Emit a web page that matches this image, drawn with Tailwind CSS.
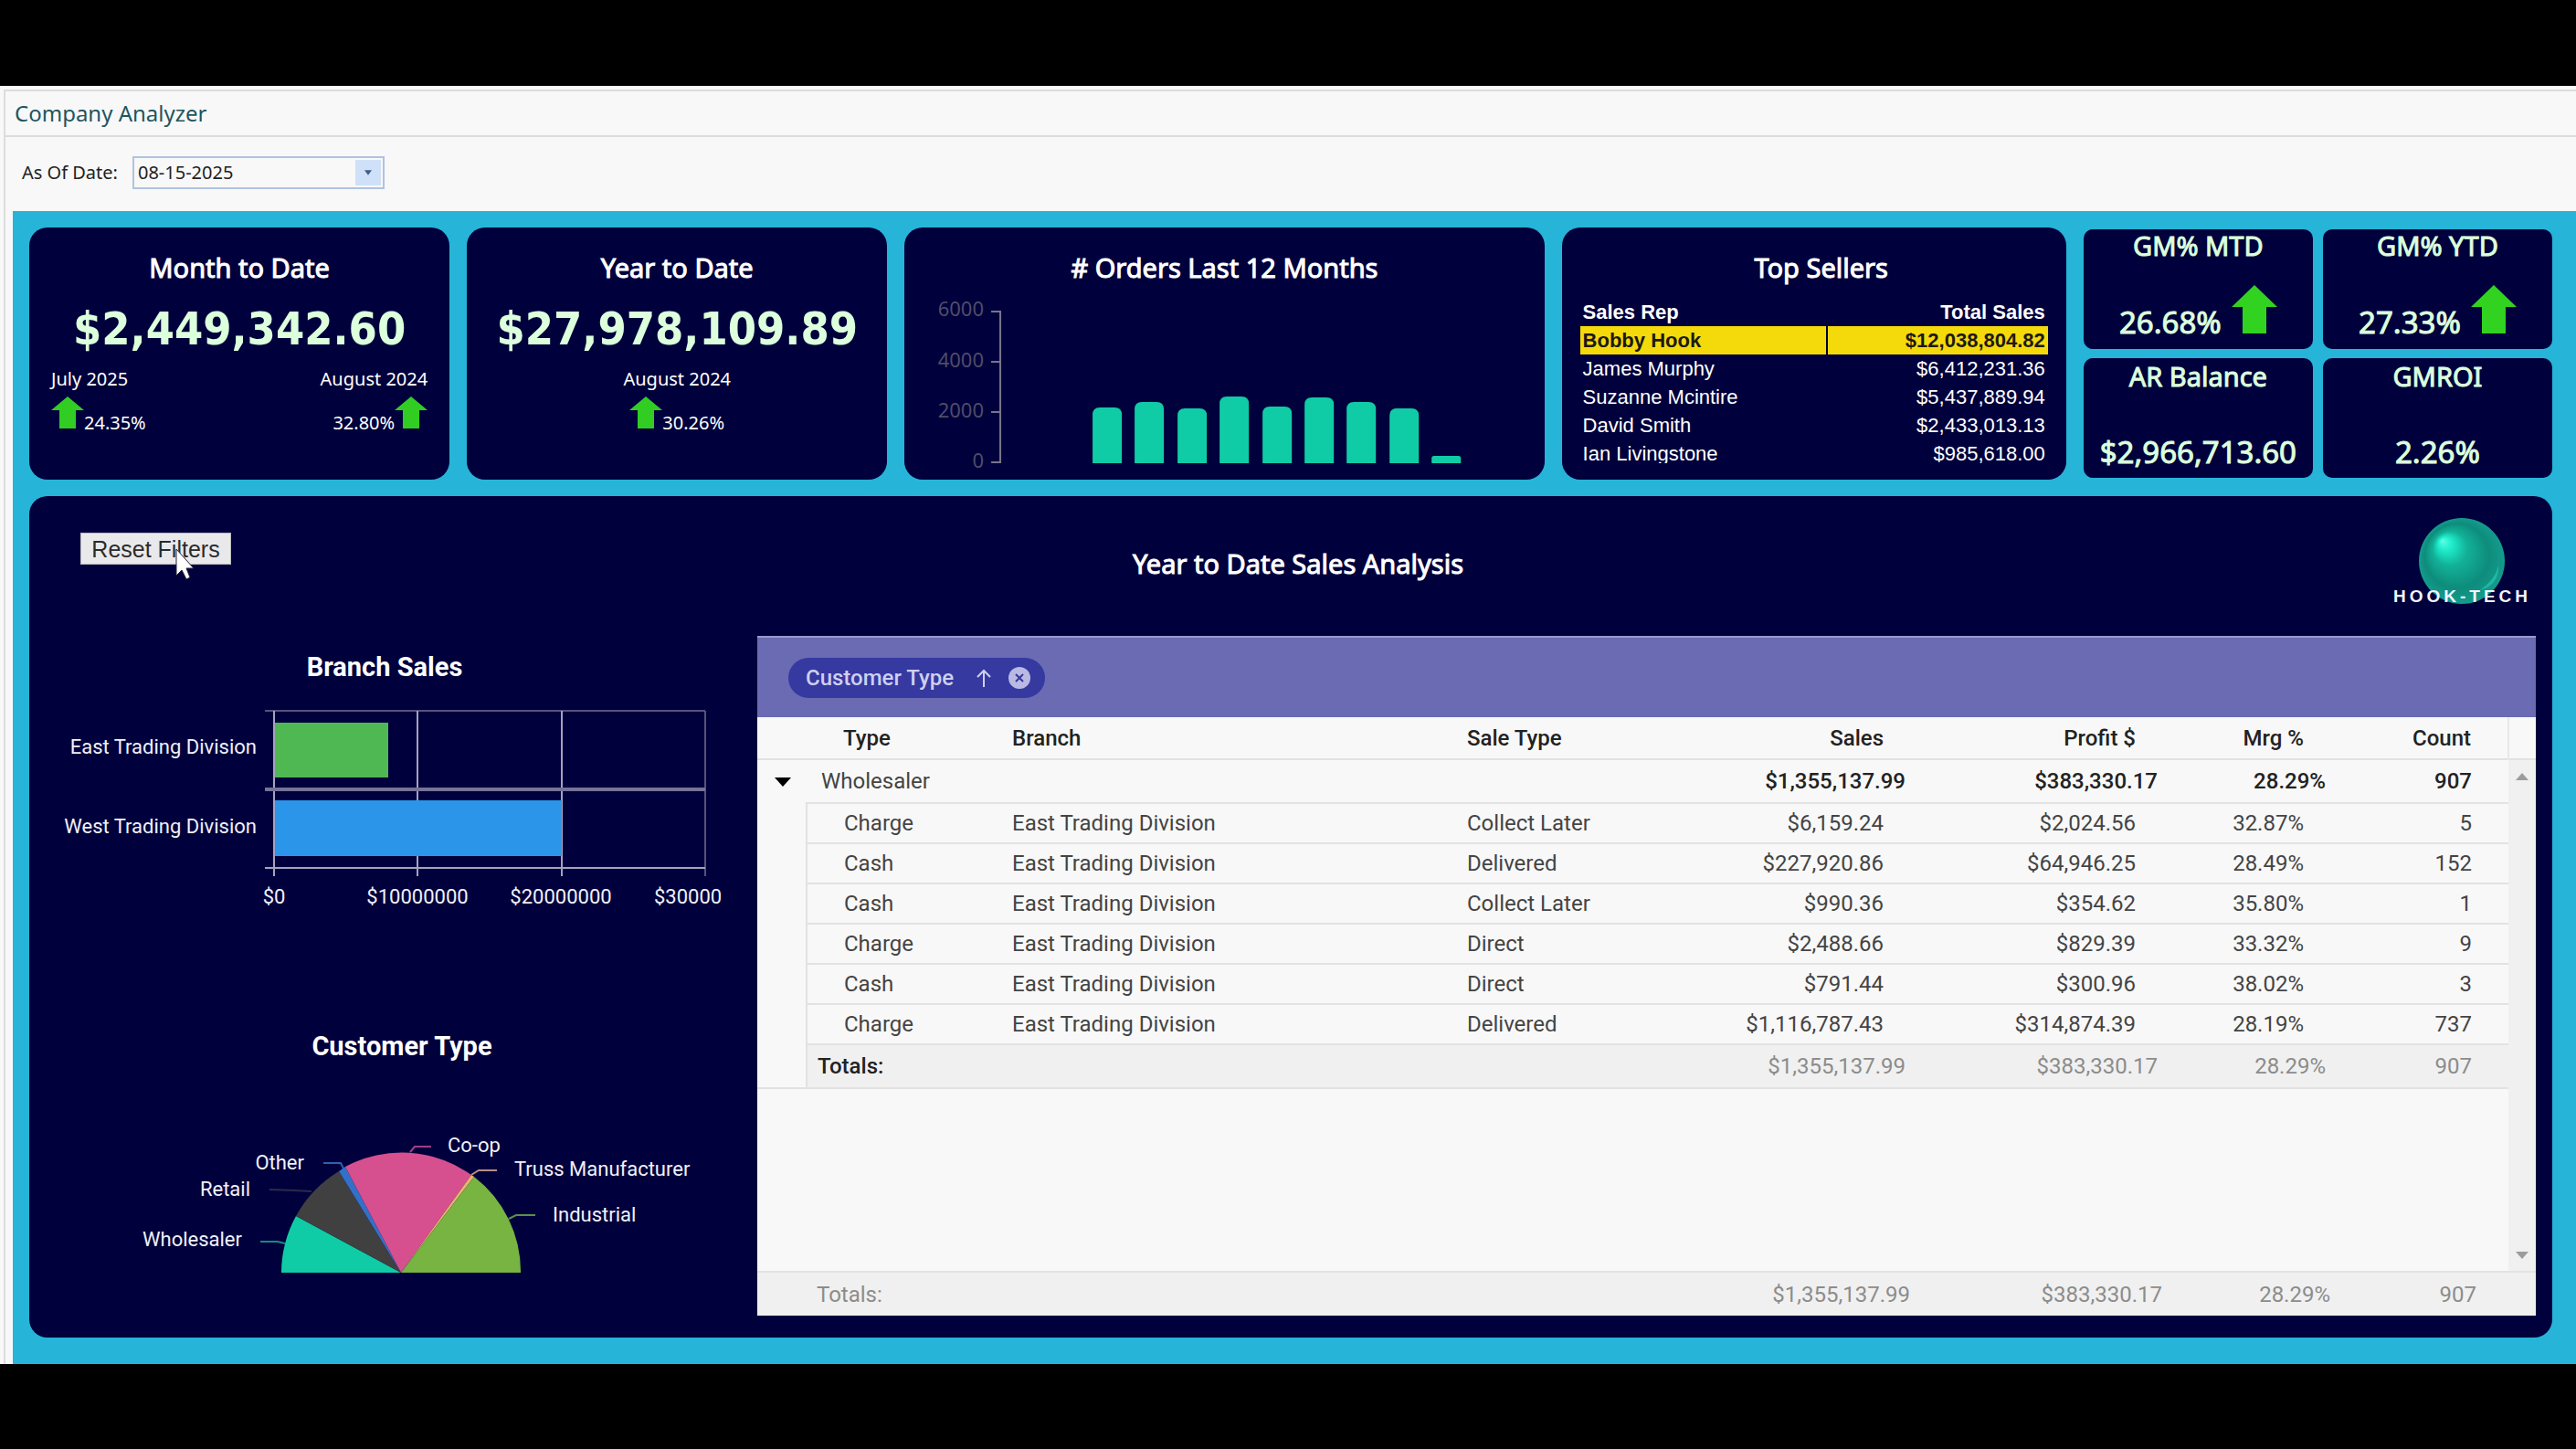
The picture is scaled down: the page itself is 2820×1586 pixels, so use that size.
<!DOCTYPE html>
<html lang="en">
<head>
  <meta charset="UTF-8" />
  <meta name="viewport" content="width=device-width, initial-scale=1.0" />
  <title>Company Analyzer</title>
  <script src="https://cdn.jsdelivr.net/npm/@tailwindcss/browser@4"></script>
</head>
<body class="bg-black min-h-screen flex flex-col pt-[94px] pb-[93px] font-['Noto_Sans',sans-serif]">

  <div class="flex-1 flex flex-col bg-[#f8f8f8] pl-1 pt-1">
    <div class="flex-1 flex flex-col border-l-2 border-t-2 border-[#dcdcdc]">

      <!-- TITLE BAR -->
      <header class="h-[50px] flex items-center pl-[10px] border-b-2 border-[#dcdcdc]">
        <h1 class="text-[24px] leading-8 text-[#1f5560]">Company Analyzer</h1>
      </header>

      <!-- DATE FILTER -->
      <form class="h-[81px] flex items-center pl-[18px] pb-1 gap-4 text-[20px] text-[#222]">
        <label for="asOfDate">As Of Date:</label>
        <div class="w-[276px] h-9 flex items-stretch border-2 border-[#b0c3e0] p-0.5">
          <input type="text" id="asOfDate" value="08-15-2025" class="flex-1 min-w-0 pl-0.5 outline-none">
          <button type="button" aria-label="Open calendar" class="w-7 bg-[#cfe1f8] flex items-center justify-center">
            <svg width="8" height="6" viewBox="0 0 10 7"><path d="M0 0h10L5 7z" fill="#3f5c8c" /></svg>
          </button>
        </div>
      </form>

      <!-- DASHBOARD -->
      <main class="flex-1 ml-2 bg-[#26b4d8] pl-[18px] pr-[26px] pt-[18px] pb-[29px] flex flex-col gap-[18px]">

        <!-- KPI CARDS -->
        <div class="grid grid-cols-[460fr_460fr_700fr_552fr_513fr] gap-[19px] min-h-[276px]">

          <section class="bg-[#00003c] rounded-[20px] px-6 pt-6 text-white text-[20px]">
            <h2 class="text-center text-[29px] leading-10 [-webkit-text-stroke:1px]">Month to Date</h2>
            <p class="mt-[17px] text-center text-[50px] leading-[60px] font-bold font-['DejaVu_Sans_Condensed',sans-serif] text-[#dcffdc]">$2,449,342.60</p>
            <div class="mt-[13px] flex justify-between leading-6">
              <div>
                <p>July 2025</p>
                <p class="mt-[7px] flex items-end">
                  <svg class="mb-1.5" width="36" height="35" viewBox="0 0 36 35"><path d="M18 0L36 15H27V35H9V15H0z" fill="#32cd23" /></svg>
                  24.35%
                </p>
              </div>
              <div class="flex flex-col items-end">
                <p>August 2024</p>
                <p class="mt-[7px] flex items-end">
                  32.80%
                  <svg class="mb-1.5" width="36" height="35" viewBox="0 0 36 35"><path d="M18 0L36 15H27V35H9V15H0z" fill="#32cd23" /></svg>
                </p>
              </div>
            </div>
          </section>

          <section class="bg-[#00003c] rounded-[20px] px-6 pt-6 text-white text-[20px]">
            <h2 class="text-center text-[29px] leading-10 [-webkit-text-stroke:1px]">Year to Date</h2>
            <p class="mt-[17px] text-center text-[50px] leading-[60px] font-bold font-['DejaVu_Sans_Condensed',sans-serif] text-[#dcffdc]">$27,978,109.89</p>
            <div class="mt-[13px] flex flex-col items-center leading-6">
              <p>August 2024</p>
              <p class="mt-[7px] flex items-end">
                <svg class="mb-1.5" width="36" height="35" viewBox="0 0 36 35"><path d="M18 0L36 15H27V35H9V15H0z" fill="#32cd23" /></svg>
                30.26%
              </p>
            </div>
          </section>

          <section class="bg-[#00003c] rounded-[20px] pt-6 text-white">
            <h2 class="text-center text-[29px] leading-10 [-webkit-text-stroke:1px]"># Orders Last 12 Months</h2>
            <svg class="w-full mt-px" viewBox="0 0 700 211">
              <g class="text-[22px]" fill="#4f4c68" text-anchor="end">
                <text x="87" y="32">6000</text>
                <text x="87" y="88">4000</text>
                <text x="87" y="143">2000</text>
                <text x="87" y="198">0</text>
              </g>
              <path d="M95 27h10M95 82h10M95 137h10M95 192h10M105 26v167" stroke="#77748f" stroke-width="2" fill="none" />
              <g id="orderBars" fill="#10cca6"></g>
            </svg>
          </section>

          <section class="bg-[#00003c] rounded-[20px] px-5 pt-6 text-white">
            <h2 class="text-center text-[29px] leading-10 [-webkit-text-stroke:1px] pl-4">Top Sellers</h2>
            <div class="mt-3 h-[182px] overflow-hidden">
              <table class="w-full text-[22px] leading-[31px] font-['Liberation_Sans',Arial,sans-serif]">
                <thead>
                  <tr class="h-8">
                    <th class="w-[270px] text-left px-[3px]">Sales Rep</th>
                    <th class="text-right px-[3px]">Total Sales</th>
                  </tr>
                </thead>
                <tbody>
                  <tr class="bg-[#f5da0b] text-[#1c1a10] font-bold">
                    <td class="px-[3px] border-r-2 border-[#00003c]">Bobby Hook</td>
                    <td class="text-right px-[3px]">$12,038,804.82</td>
                  </tr>
                  <tr><td class="px-[3px]">James Murphy</td><td class="text-right px-[3px]">$6,412,231.36</td></tr>
                  <tr><td class="px-[3px]">Suzanne Mcintire</td><td class="text-right px-[3px]">$5,437,889.94</td></tr>
                  <tr><td class="px-[3px]">David Smith</td><td class="text-right px-[3px]">$2,433,013.13</td></tr>
                  <tr><td class="px-[3px]">Ian Livingstone</td><td class="text-right px-[3px]">$985,618.00</td></tr>
                </tbody>
              </table>
            </div>
          </section>

          <div class="grid grid-cols-2 grid-rows-2 gap-x-[11px] gap-y-[10px] py-0.5 text-[#dcffdc]">
            <section class="bg-[#00003c] rounded-[10px] pt-0.5 pb-[9px] flex flex-col justify-between items-center">
              <h3 class="text-[29px] leading-8 [-webkit-text-stroke:1px]">GM% MTD</h3>
              <p class="flex items-end gap-[11px] text-[33px] leading-10 [-webkit-text-stroke:1px]">
                26.68%
                <svg class="mb-2" width="50" height="53" viewBox="0 0 50 53"><path d="M25 0L50 24H38V53H12V24H0z" fill="#32d220" /></svg>
              </p>
            </section>
            <section class="bg-[#00003c] rounded-[10px] pt-0.5 pb-[9px] flex flex-col justify-between items-center">
              <h3 class="text-[29px] leading-8 [-webkit-text-stroke:1px]">GM% YTD</h3>
              <p class="flex items-end gap-[11px] text-[33px] leading-10 [-webkit-text-stroke:1px]">
                27.33%
                <svg class="mb-2" width="50" height="53" viewBox="0 0 50 53"><path d="M25 0L50 24H38V53H12V24H0z" fill="#32d220" /></svg>
              </p>
            </section>
            <section class="bg-[#00003c] rounded-[10px] pt-1 pb-2 flex flex-col justify-between items-center">
              <h3 class="text-[29px] leading-8 [-webkit-text-stroke:1px]">AR Balance</h3>
              <p class="text-[33px] leading-10 [-webkit-text-stroke:1px]">$2,966,713.60</p>
            </section>
            <section class="bg-[#00003c] rounded-[10px] pt-1 pb-2 flex flex-col justify-between items-center">
              <h3 class="text-[29px] leading-8 [-webkit-text-stroke:1px]">GMROI</h3>
              <p class="text-[33px] leading-10 [-webkit-text-stroke:1px]">2.26%</p>
            </section>
          </div>
        </div>

        <!-- SALES ANALYSIS -->
        <section class="flex-1 flex flex-col bg-[#00003c] rounded-[20px] pb-6 text-white">
          <div class="grid grid-cols-[1fr_auto_1fr] items-start h-[153px] pl-14 pr-6">
            <div class="pt-10">
              <div class="relative w-[165px]">
                <button type="button" class="w-full h-[35px] bg-[#e9e9ec] border border-[#b9b9bd] text-[25px] leading-8 text-[#2b2b2b] font-['Liberation_Sans',Arial,sans-serif]">Reset Filters</button>
                <!-- mouse pointer -->
                <svg class="absolute left-[104px] top-[17px]" width="21" height="36" viewBox="0 0 21 36"><path d="M1 1V30L7 24L12 34L16 32L12 22H20z" fill="#fff" stroke="#22223c" stroke-width="1" /></svg>
              </div>
            </div>
            <h2 class="pt-[54px] mr-4 text-[29px] leading-10 [-webkit-text-stroke:1px]">Year to Date Sales Analysis</h2>
            <svg class="mt-6 justify-self-end" width="150" height="98" viewBox="0 0 150 98">
              <defs>
                <radialGradient id="ball" cx="0.5" cy="0.5" r="0.5" fx="0.27" fy="0.26">
                  <stop offset="0" stop-color="#5fffe6" />
                  <stop offset="0.16" stop-color="#1eeccb" />
                  <stop offset="0.4" stop-color="#12b197" />
                  <stop offset="0.75" stop-color="#0e8c7c" />
                  <stop offset="1" stop-color="#149c8c" />
                </radialGradient>
              </defs>
              <circle cx="75" cy="47" r="47" fill="url(#ball)" />
              <path d="M115 52C112 64 106 71 95 79C108 76 116 66 115 52z" fill="#1fb8a4" />
              <text x="0" y="92" class="text-[19px] font-bold font-['Liberation_Sans',Arial,sans-serif] tracking-[4px]" fill="#f4f4ff">HOOK-TECH</text>
            </svg>
          </div>

          <div class="flex-1 grid grid-cols-[797fr_1947fr] pr-[18px] font-['Roboto',sans-serif]">

            <!-- branch + customer charts -->
            <svg class="w-full" viewBox="0 0 797 743">
              <text x="389" y="44" text-anchor="middle" fill="#fff" class="text-[29px] font-bold">Branch Sales</text>
              <g stroke="#a5a2bd" stroke-width="2" fill="none">
                <path d="M258 82H740M740 82V263" stroke="#56537a" />
                <path d="M258 254H740M425 82V263M583 82V263M268 82V263" />
                <path d="M258 168H740" stroke="#76739a" stroke-width="4" />
              </g>
              <rect x="269" y="95" width="124" height="60" fill="#50b853" />
              <rect x="269" y="180" width="314" height="61" fill="#2b95ea" />
              <g class="text-[22px]" fill="#f0f0fa">
                <g text-anchor="end">
                  <text x="249" y="129">East Trading Division</text>
                  <text x="249" y="216">West Trading Division</text>
                </g>
                <g text-anchor="middle">
                  <text x="268" y="293">$0</text>
                  <text x="425" y="293">$10000000</text>
                  <text x="582" y="293">$20000000</text>
                </g>
                <text x="684" y="293">$30000</text>
              </g>

              <text x="408" y="459" text-anchor="middle" fill="#fff" class="text-[29px] font-bold">Customer Type</text>
              <path d="M407 697H276A131 131 0 0 1 292 635z" fill="#10cca6" />
              <path d="M407 697L292 635A131 131 0 0 1 339 586z" fill="#404040" />
              <path d="M407 697L339 586A131 131 0 0 1 346 581z" fill="#3470c8" />
              <path d="M407 697L346 581A131 131 0 0 1 484 590z" fill="#d6508f" />
              <path d="M407 697L484 590A131 131 0 0 1 487 592z" fill="#e8b36c" />
              <path d="M407 697L487 592A131 131 0 0 1 538 697z" fill="#77b442" />
              <g fill="none" stroke-width="2">
                <path d="M417 565L422 559H440" stroke="#a03f86" />
                <path d="M484 590L492 585H512" stroke="#b98d86" />
                <path d="M525 638L533 634H554" stroke="#5c8f4c" />
                <path d="M344 583L341 577H322" stroke="#3060b0" />
                <path d="M309 608L290 607L263 606" stroke="#2c2a4c" />
                <path d="M280 665L272 663H253" stroke="#168a84" />
              </g>
              <g class="text-[22px]" fill="#f0f0fa">
                <text x="458" y="565">Co-op</text>
                <text x="531" y="591">Truss Manufacturer</text>
                <text x="573" y="641">Industrial</text>
                <g text-anchor="end">
                  <text x="301" y="584">Other</text>
                  <text x="242" y="613">Retail</text>
                  <text x="233" y="668">Wholesaler</text>
                </g>
              </g>
            </svg>

            <!-- data grid -->
            <div class="flex flex-col bg-[#f8f8f8] text-[#444] text-[24px] leading-8">
              <div class="h-[89px] bg-[#6a6bb2] border-t-2 border-[#9a98cc] flex items-center pl-[34px]">
                <div class="h-11 w-[281px] rounded-full bg-[#3539a0] text-[#cfcff0] font-medium flex items-center justify-between pl-[19px] pr-4">
                  Customer Type
                  <div class="flex items-center gap-[18px]">
                    <svg width="18" height="20" viewBox="0 0 18 20"><path d="M9 20V2M2 9L9 2L16 9" fill="none" stroke="#cfcff0" stroke-width="2" /></svg>
                    <button type="button" aria-label="Remove group">
                      <svg width="24" height="24" viewBox="0 0 24 24"><circle cx="12" cy="12" r="12" fill="#b9b9e2" /><path d="M8 8L16 16M16 8L8 16" stroke="#3539a0" stroke-width="2" /></svg>
                    </button>
                  </div>
                </div>
              </div>

              <table class="flex-1 w-full table-fixed">
                <colgroup>
                  <col class="w-[54px]"><col class="w-[185px]"><col><col class="w-[260px]"><col class="w-[260px]"><col class="w-[276px]"><col class="w-[184px]"><col class="w-[200px]"><col class="w-[30px]">
                </colgroup>
                <thead>
                  <tr class="h-[46px] border-b-2 border-[#e2e2e2] text-[#222] [&>th]:font-medium">
                    <th></th>
                    <th class="text-left pl-10">Type</th>
                    <th class="text-left pl-10">Branch</th>
                    <th class="text-left pl-10">Sale Type</th>
                    <th class="text-right pr-6">Sales</th>
                    <th class="text-right pr-6">Profit $</th>
                    <th class="text-right pr-6">Mrg %</th>
                    <th class="text-right pr-10">Count</th>
                    <th class="border-l-2 border-[#e8e8e8]"></th>
                  </tr>
                </thead>
                <tbody id="rows">
                  <tr class="h-12">
                    <td class="pl-[19px]"><svg width="18" height="10" viewBox="0 0 18 10"><path d="M0 0h18L9 10z" fill="#000" /></svg></td>
                    <td class="pl-4" colspan="3">Wholesaler</td>
                    <td class="text-right font-medium text-[#222]">$1,355,137.99</td>
                    <td class="text-right font-medium text-[#222]">$383,330.17</td>
                    <td class="text-right font-medium text-[#222]">28.29%</td>
                    <td class="text-right font-medium text-[#222] pr-10">907</td>
                    <td rowspan="9" class="bg-[#f0f0f0] align-top">
                      <div class="flex flex-col justify-between items-center h-[556px] pt-[14px] pb-[10px]">
                        <svg width="14" height="8" viewBox="0 0 14 8"><path d="M0 8L7 0L14 8z" fill="#9c9c9c" /></svg>
                        <svg width="14" height="8" viewBox="0 0 14 8"><path d="M0 0L7 8L14 0z" fill="#9c9c9c" /></svg>
                      </div>
                    </td>
                  </tr>
                  <tr class="h-12 text-[#8c8c8c]">
                    <td class="border-r-2 border-b-2 border-[#e2e2e2]"></td>
                    <td colspan="3" class="bg-[#f0f0f0] border-y-2 border-[#e2e2e2] pl-[11px] font-medium text-[#222]">Totals:</td>
                    <td class="bg-[#f0f0f0] border-y-2 border-[#e2e2e2] text-right">$1,355,137.99</td>
                    <td class="bg-[#f0f0f0] border-y-2 border-[#e2e2e2] text-right">$383,330.17</td>
                    <td class="bg-[#f0f0f0] border-y-2 border-[#e2e2e2] text-right">28.29%</td>
                    <td class="bg-[#f0f0f0] border-y-2 border-[#e2e2e2] text-right pr-10">907</td>
                  </tr>
                  <tr><td colspan="8"></td></tr>
                </tbody>
                <tfoot>
                  <tr class="h-12 bg-[#f0f0f0] border-t-2 border-[#e2e2e2] text-[#8c8c8c]">
                    <td></td>
                    <td colspan="3" class="pl-[11px]">Totals:</td>
                    <td class="text-right"><span class="-mr-[5px]">$1,355,137.99</span></td>
                    <td class="text-right"><span class="-mr-[5px]">$383,330.17</span></td>
                    <td class="text-right"><span class="-mr-[5px]">28.29%</span></td>
                    <td class="text-right pr-[35px]">907</td>
                    <td></td>
                  </tr>
                </tfoot>
              </table>
            </div>
          </div>
        </section>
      </main>
    </div>
  </div>

  <!-- SCRIPT -->
  <script>
    // type, branch, sale type, sales, profit, margin, count
    const sales = [
      ["Charge", "East Trading Division", "Collect Later", "$6,159.24", "$2,024.56", "32.87%", "5"],
      ["Cash", "East Trading Division", "Delivered", "$227,920.86", "$64,946.25", "28.49%", "152"],
      ["Cash", "East Trading Division", "Collect Later", "$990.36", "$354.62", "35.80%", "1"],
      ["Charge", "East Trading Division", "Direct", "$2,488.66", "$829.39", "33.32%", "9"],
      ["Cash", "East Trading Division", "Direct", "$791.44", "$300.96", "38.02%", "3"],
      ["Charge", "East Trading Division", "Delivered", "$1,116,787.43", "$314,874.39", "28.19%", "737"],
    ];
    const cellClasses = ["pl-10", "pl-10", "pl-10", "text-right pr-6", "text-right pr-6", "text-right pr-6", "text-right pr-10"];

    const groupRow = document.querySelector("#rows tr");
    groupRow.insertAdjacentHTML("afterend", sales.map((row) => `
      <tr class="h-[44px]">
        <td class="border-r-2 border-[#e2e2e2]"></td>
        ${row.map((cell, i) => `<td class="border-t-2 border-[#e2e2e2] ${cellClasses[i]}">${cell}</td>`).join("")}
      </tr>`).join(""));

    // orders per month, 2000 orders = 55 units
    const orders = [2220, 2430, 2180, 2640, 2260, 2620, 2430, 2180, 290];
    document.getElementById("orderBars").innerHTML = orders.map((n, i) => {
      const x = 206 + Math.round(i * 46.4);
      const h = Math.round(n * 0.0275);
      const r = Math.min(8, h / 3);
      return `<path d="M${x} 193v${-(h - r)}q0 ${-r} ${r} ${-r}h${32 - 2 * r}q${r} 0 ${r} ${r}v${h - r}z" />`;
    }).join("");
  </script>
</body>
</html>
